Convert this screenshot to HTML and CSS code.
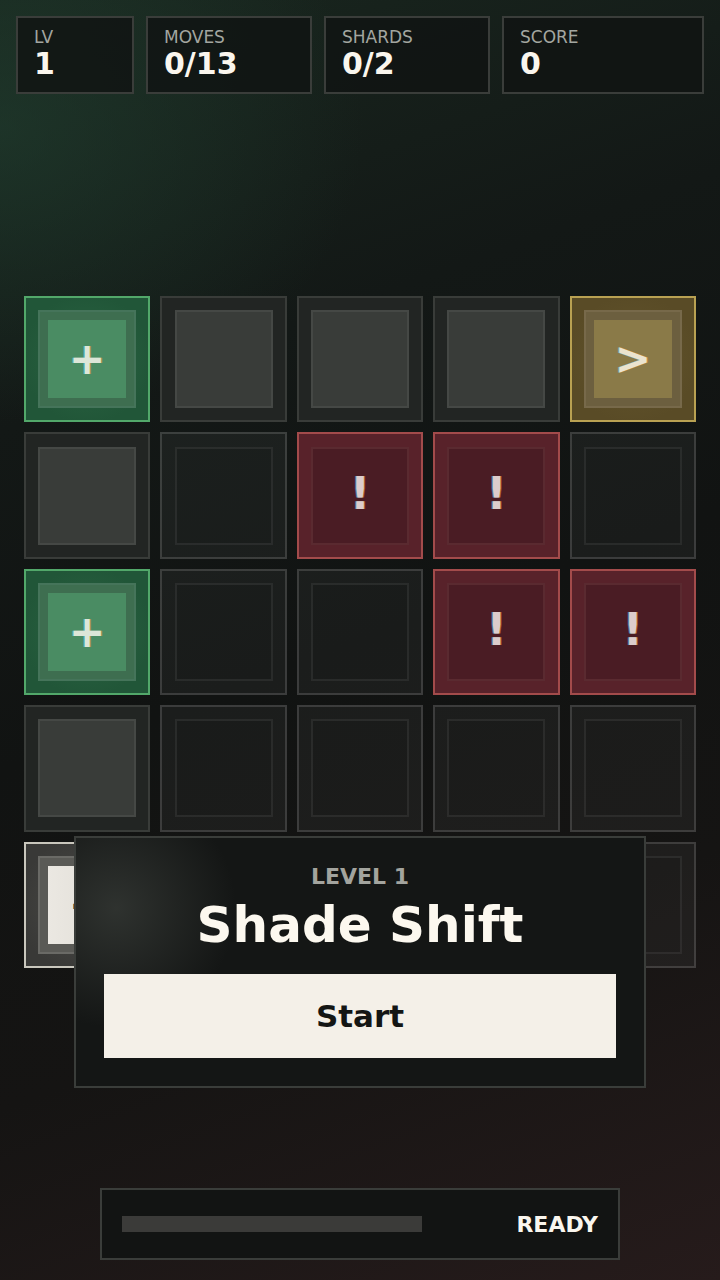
FILE: index.html
```html
<!DOCTYPE html>
<html lang="en">
<head>
<meta charset="utf-8">
<title>Shade Shift</title>
<link rel="stylesheet" href="styles.css">
</head>
<body>
<div class="app">
  <header class="stats">
    <div class="stat"><div class="stat-label">LV</div><div class="stat-value">1</div></div>
    <div class="stat"><div class="stat-label">MOVES</div><div class="stat-value">0/13</div></div>
    <div class="stat"><div class="stat-label">SHARDS</div><div class="stat-value">0/2</div></div>
    <div class="stat"><div class="stat-label">SCORE</div><div class="stat-value">0</div></div>
  </header>

  <main class="board">
    <div class="cell green"><div class="inner"><div class="fill"><span class="glyph">+</span></div></div></div>
    <div class="cell gray"><div class="inner"></div></div>
    <div class="cell gray"><div class="inner"></div></div>
    <div class="cell gray"><div class="inner"></div></div>
    <div class="cell gold"><div class="inner"><div class="fill"><span class="glyph">&gt;</span></div></div></div>

    <div class="cell gray"><div class="inner"></div></div>
    <div class="cell dark"><div class="inner"></div></div>
    <div class="cell red"><div class="inner"><span class="glyph">!</span></div></div>
    <div class="cell red"><div class="inner"><span class="glyph">!</span></div></div>
    <div class="cell dark"><div class="inner"></div></div>

    <div class="cell green"><div class="inner"><div class="fill"><span class="glyph">+</span></div></div></div>
    <div class="cell dark"><div class="inner"></div></div>
    <div class="cell dark"><div class="inner"></div></div>
    <div class="cell red"><div class="inner"><span class="glyph">!</span></div></div>
    <div class="cell red"><div class="inner"><span class="glyph">!</span></div></div>

    <div class="cell gray"><div class="inner"></div></div>
    <div class="cell dark"><div class="inner"></div></div>
    <div class="cell dark"><div class="inner"></div></div>
    <div class="cell dark"><div class="inner"></div></div>
    <div class="cell dark"><div class="inner"></div></div>

    <div class="cell light"><div class="inner"><div class="fill"><span class="glyph">+</span></div></div></div>
    <div class="cell dark"><div class="inner"></div></div>
    <div class="cell dark"><div class="inner"></div></div>
    <div class="cell dark"><div class="inner"></div></div>
    <div class="cell dark"><div class="inner"></div></div>
  </main>

  <section class="modal">
    <div class="modal-level">LEVEL 1</div>
    <div class="modal-title">Shade Shift</div>
    <button class="start-btn">Start</button>
  </section>

  <footer class="status">
    <div class="track"></div>
    <div class="status-text">READY</div>
  </footer>
</div>
</body>
</html>
```

FILE: styles.css
```css
* { box-sizing: border-box; }

html, body {
  margin: 0;
  padding: 0;
  width: 720px;
  height: 1280px;
  overflow: hidden;
  background: #111312;
}

body {
  font-family: "DejaVu Sans", "Liberation Sans", sans-serif;
  color: #faf6ee;
}

.app {
  position: relative;
  width: 720px;
  height: 1280px;
  display: flex;
  flex-direction: column;
  padding: 16px 16px 20px;
  background:
    radial-gradient(ellipse 520px 420px at 0% 10%, rgba(34, 66, 50, 0.55), rgba(34, 66, 50, 0) 70%),
    linear-gradient(160deg, #19271f 0%, #131816 28%, #111312 50%, #151413 72%, #261b1b 100%);
}

/* Stats header */
.stats {
  display: grid;
  grid-template-columns: 118px 166px 166px 1fr;
  gap: 12px;
}

.stat {
  border: 2px solid #3a3d3a;
  background: rgba(17, 20, 19, 0.85);
  padding: 9px 16px 12px;
}

.stat-label {
  font-size: 17px;
  line-height: 20px;
  color: #a3a6a0;
  margin-bottom: 1px;
}

.stat-value {
  font-size: 30px;
  line-height: 32px;
  font-weight: bold;
  color: #faf6ee;
}

/* Board */
.board {
  margin: 202px 8px 0;
  display: grid;
  grid-template-columns: repeat(5, 1fr);
  gap: 10px;
}

.cell {
  aspect-ratio: 1 / 1;
  border: 2px solid rgba(255, 255, 255, 0.13);
  background: rgba(255, 255, 255, 0.04);
  display: flex;
  align-items: center;
  justify-content: center;
}

.inner {
  width: 98px;
  height: 98px;
  border: 2px solid rgba(255, 255, 255, 0.06);
  background: rgba(0, 0, 0, 0.05);
  padding: 8px;
  display: flex;
  align-items: center;
  justify-content: center;
}

.fill {
  width: 78px;
  height: 78px;
  display: flex;
  align-items: center;
  justify-content: center;
}

.glyph {
  font-size: 44px;
  font-weight: bold;
  line-height: 1;
  text-shadow: -1px 0 rgba(90, 200, 240, 0.55), 1px 0 rgba(240, 150, 60, 0.55);
}

.cell.gray {
  background: #222523;
  border-color: #393c39;
}
.cell.gray .inner {
  background: #393c39;
  border-color: #454845;
}

.cell.dark {
  border-color: rgba(255, 255, 255, 0.14);
  background: rgba(255, 255, 255, 0.045);
}
.cell.dark .inner {
  background: rgba(0, 0, 0, 0.06);
  border-color: rgba(255, 255, 255, 0.07);
}

.cell.green {
  border-color: #52a86a;
  background: radial-gradient(circle at 50% 50%, #2a6442 0%, #215638 75%);
}
.cell.green .inner {
  background: #3e6e50;
  border-color: #45745a;
}
.cell.green .fill {
  background: #4a8c63;
}
.cell.green .glyph {
  color: #dde6d8;
}

.cell.gold {
  border-color: #b9a152;
  background: radial-gradient(circle at 50% 50%, #62542c 0%, #594b26 75%);
}
.cell.gold .inner {
  background: #6c5f3f;
  border-color: #77694a;
}
.cell.gold .fill {
  background: #8a7a48;
}
.cell.gold .glyph {
  color: #ebe3cf;
}

.cell.red {
  border-color: #a34b4b;
  background: #58222a;
}
.cell.red .inner {
  background: #4a1c24;
  border-color: #5a2a30;
}
.cell.red .glyph {
  color: #dccccc;
  margin-top: -4px;
}

.cell.light {
  border-color: #c9c7bd;
  background: radial-gradient(circle at 50% 50%, #4a4a47 0%, #393937 80%);
}
.cell.light .inner {
  background: #5a5a56;
  border-color: #6a6a66;
}
.cell.light .fill {
  background: linear-gradient(90deg, #ebe8e2, #dedbd4);
}
.cell.light .glyph {
  color: #233329;
  text-shadow: none;
}

/* Modal */
.modal {
  position: absolute;
  left: 74px;
  top: 836px;
  width: 572px;
  height: 252px;
  border: 2px solid #3a3d3a;
  background:
    radial-gradient(circle 120px at 40px 70px, rgba(58, 62, 58, 0.7), rgba(58, 62, 58, 0) 100%),
    #141615;
  padding: 26px 28px 28px;
  display: flex;
  flex-direction: column;
  align-items: stretch;
  text-align: center;
}

.modal-level {
  font-size: 22px;
  line-height: 26px;
  font-weight: bold;
  color: #a3a49e;
}

.modal-title {
  margin-top: 6px;
  font-size: 50px;
  line-height: 58px;
  font-weight: bold;
  color: #fcf8ef;
}

.start-btn {
  margin-top: 20px;
  height: 84px;
  border: none;
  background: #f4f0e8;
  color: #141614;
  font-family: "DejaVu Sans", "Liberation Sans", sans-serif;
  font-size: 31px;
  font-weight: bold;
  padding: 0;
  cursor: pointer;
}

/* Status bar */
.status {
  margin-top: auto;
  align-self: center;
  width: 520px;
  height: 72px;
  border: 2px solid #3a3d3a;
  background: #121413;
  display: flex;
  align-items: center;
  justify-content: space-between;
  padding: 0 20px;
}

.track {
  width: 300px;
  height: 16px;
  background: #3b3b39;
}

.status-text {
  font-size: 22px;
  font-weight: bold;
  color: #faf6ee;
}
```
